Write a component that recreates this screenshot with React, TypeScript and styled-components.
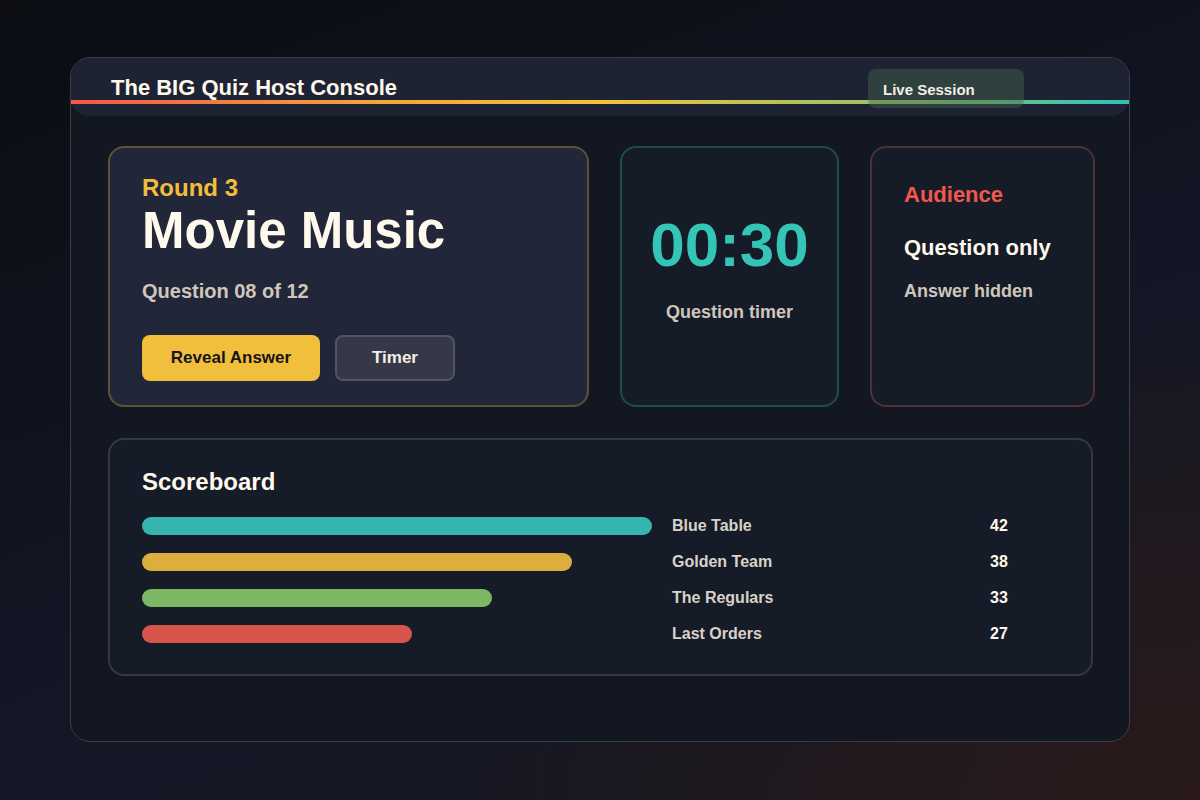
import React from "react";
import styled, { createGlobalStyle } from "styled-components";

const Global = createGlobalStyle`
  html, body { margin: 0; padding: 0; }
  body { width: 1200px; height: 800px; overflow: hidden;
    font-family: "Liberation Sans", Arial, sans-serif;
    background: radial-gradient(ellipse at 100% 100%, #2a1a1a 0%, rgba(20,20,28,0) 45%), linear-gradient(160deg, #0b0d13 0%, #131726 60%, #181820 100%);
  }
`;

const Page = styled.div`
  width: 1200px; height: 800px; box-sizing: border-box;
  padding: 57px 70px 58px;
`;
const Frame = styled.div`
  height: 100%; box-sizing: border-box;
  border: 1.5px solid #3a3d48; border-radius: 20px;
  background: #131722; overflow: hidden;
  display: flex; flex-direction: column;
`;
const Header = styled.div`
  position: relative; height: 58px; flex: none;
  background: #1e2334; border-radius: 0 0 18px 18px;
  display: flex; align-items: flex-start; padding: 0 0 0 40px;
`;
const Title = styled.div`
  color: #fff8ec; font-size: 22px; font-weight: 700; margin-top: 17px;
`;
const Badge = styled.div`
  margin-left: auto; margin-right: 105px; margin-top: 11px;
  width: 156px; height: 39px; box-sizing: border-box; border-radius: 8px;
  background: rgba(70,100,75,0.45); color: #f4efe6; font-size: 15px; font-weight: 700;
  padding: 12px 0 0 15px; position: relative; z-index: 1;
`;
const Stripe = styled.div`
  position: absolute; left: 0; right: 0; top: 42px; height: 4px;
  background: linear-gradient(90deg, #f2574c 0%, #f4a63b 30%, #f1c33b 50%, #8dc16e 80%, #2fc2b8 100%);
`;
const Body = styled.div`
  padding: 30px 37px 0 37px; display: flex; flex-direction: column; gap: 31px;
`;
const Row = styled.div`
  display: flex; gap: 31px; height: 261px;
`;
const Card = styled.div<{ $border: string; $bg?: string; $w: number }>`
  width: ${p => p.$w}px; box-sizing: border-box; flex: none;
  border: 2px solid ${p => p.$border}; border-radius: 16px;
  background: ${p => p.$bg || "#161b28"};
`;
const QuizCard = styled(Card)`padding: 26px 32px;`;
const Round = styled.div`color: #f1be3b; font-size: 24px; font-weight: 700;`;
const Big = styled.div`color: #fff8ec; font-size: 51px; font-weight: 700; line-height: 58px;`;
const Sub = styled.div<{ $size?: number; $mt?: number }>`
  color: #cfc7bc; font-size: ${p => p.$size || 20}px; font-weight: 700; margin-top: ${p => p.$mt || 0}px;
`;
const Buttons = styled.div`display: flex; gap: 15px; margin-top: 32px;`;
const Btn = styled.div<{ $primary?: boolean; $w: number }>`
  width: ${p => p.$w}px; height: 46px; box-sizing: border-box; border-radius: 8px;
  display: flex; align-items: center; justify-content: center;
  font-size: 17px; font-weight: 700;
  background: ${p => p.$primary ? "#f1bf3b" : "#363848"};
  color: ${p => p.$primary ? "#15151a" : "#f4efe6"};
  border: ${p => p.$primary ? "none" : "2px solid #52545f"};
`;
const TimerCard = styled(Card)`
  display: flex; flex-direction: column; align-items: center; padding-top: 62px;
`;
const Clock = styled.div`color: #34c5b7; font-size: 62px; font-weight: 700; line-height: 70px;`;
const AudCard = styled(Card)`padding: 34px 32px;`;
const AudTitle = styled.div`color: #f1584b; font-size: 22px; font-weight: 700;`;
const AudMain = styled.div`color: #fff8ec; font-size: 22px; font-weight: 700; margin-top: 27px;`;
const Score = styled(Card)`padding: 28px 32px; height: 238px;`;
const ScoreTitle = styled.div`color: #fff8ec; font-size: 24px; font-weight: 700; margin-bottom: 12px;`;
const TeamRow = styled.div`display: flex; align-items: center; height: 36px;`;
const Track = styled.div`width: 510px; flex: none;`;
const Bar = styled.div<{ $c: string }>`height: 18px; border-radius: 9px; background: ${p => p.$c};`;
const Name = styled.div`margin-left: 20px; width: 318px; color: #d9d2c7; font-size: 16px; font-weight: 700;`;
const Pts = styled.div`color: #fff8ec; font-size: 16px; font-weight: 700;`;

const teams = [
  { n: "Blue Table", s: 42, w: 510, c: "#34b5ad" },
  { n: "Golden Team", s: 38, w: 430, c: "#dcae3d" },
  { n: "The Regulars", s: 33, w: 350, c: "#7db764" },
  { n: "Last Orders", s: 27, w: 270, c: "#d8554b" },
];

export default function App() {
  return (
    <>
      <Global />
      <Page>
        <Frame>
          <Header>
            <Title>The BIG Quiz Host Console</Title>
            <Badge>Live Session</Badge>
            <Stripe />
          </Header>
          <Body>
            <Row>
              <QuizCard $w={481} $border="#5e5235" $bg="#212638">
                <Round>Round 3</Round>
                <Big>Movie Music</Big>
                <Sub $mt={20}>Question 08 of 12</Sub>
                <Buttons>
                  <Btn $primary $w={178}>Reveal Answer</Btn>
                  <Btn $w={120}>Timer</Btn>
                </Buttons>
              </QuizCard>
              <TimerCard $w={219} $border="#1f4c4f">
                <Clock>00:30</Clock>
                <Sub $size={18} $mt={22}>Question timer</Sub>
              </TimerCard>
              <AudCard $w={225} $border="#4e3036">
                <AudTitle>Audience</AudTitle>
                <AudMain>Question only</AudMain>
                <Sub $size={18} $mt={20}>Answer hidden</Sub>
              </AudCard>
            </Row>
            <Score $w={985} $border="#353947">
              <ScoreTitle>Scoreboard</ScoreTitle>
              {teams.map(t => (
                <TeamRow key={t.n}>
                  <Track><Bar $c={t.c} style={{ width: t.w }} /></Track>
                  <Name>{t.n}</Name>
                  <Pts>{t.s}</Pts>
                </TeamRow>
              ))}
            </Score>
          </Body>
        </Frame>
      </Page>
    </>
  );
}
